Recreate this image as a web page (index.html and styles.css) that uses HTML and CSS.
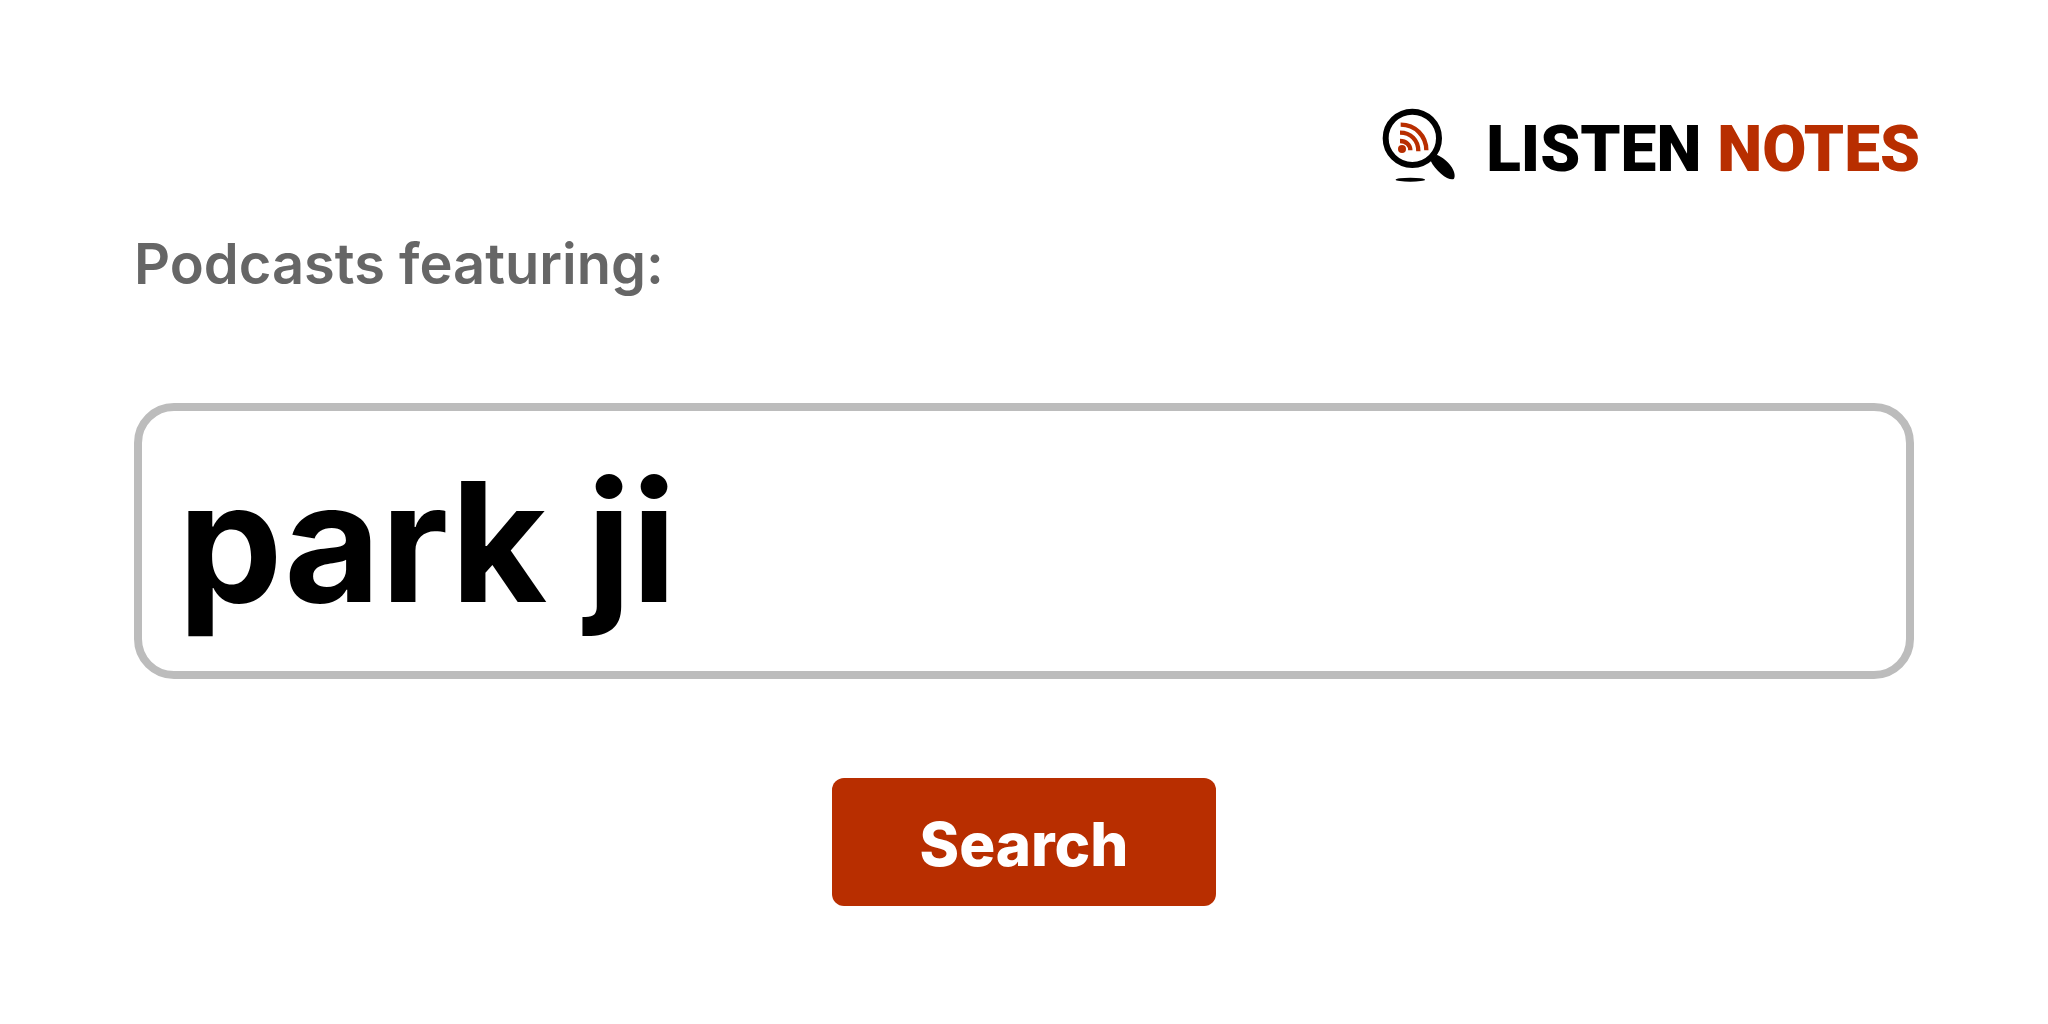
FILE: index.html
```html
<!DOCTYPE html>
<html lang="en">

<head>
    <meta charset="utf-8">
    <meta name="viewport" content="width=device-width, initial-scale=1.0">
    <title>Listen Notes</title>
    <link rel="stylesheet" href="styles.css">
</head>

<body>
    <header>
        <a class="logo" href="#">
            <svg class="logo-icon" viewBox="0 0 216 216" aria-hidden="true">
                <circle cx="91" cy="91" r="80" fill="none" stroke="#000" stroke-width="18"/>
                <path fill="#000" d="M164 140 C182 147 198 162 206 173 C217 187 221 204 216 212 C210 217 193 211 177 197 C164 185 152 172 146 158 Z"/>
                <ellipse cx="85" cy="215" rx="44" ry="6" fill="#000"/>
                <circle cx="60" cy="123" r="12" fill="#b82e00"/>
                <g fill="none" stroke="#b82e00" stroke-width="13">
                    <path d="M54 99 C72 99 85 111 85 127"/>
                    <path d="M54 74 C86 74 109 96 109 130"/>
                    <path d="M56 50 C100 50 133 84 133 127"/>
                </g>
            </svg>
            <span class="logo-text">LISTEN <span class="notes">NOTES</span></span>
        </a>
    </header>

    <main>
        <form class="search">
            <label for="query">Podcasts featuring:</label>
            <input type="text" id="query" name="q" value="park ji" autocomplete="off">
            <button type="submit">Search</button>
        </form>
    </main>
</body>

</html>
```
FILE: styles.css
```css
* {
    box-sizing: border-box;
    padding: 0;
    margin: 0;
}

body {
    background-color: #fff;
    font-family: Inter, "Liberation Sans", sans-serif;
}

header {
    display: flex;
    justify-content: flex-end;
    padding: 108px 128px 0;
}

.logo {
    display: flex;
    align-items: flex-start;
    gap: 32px;
    color: #000;
    text-decoration: none;
}

.logo-icon {
    width: 72px;
    height: 72px;
    overflow: visible;
}

.logo-text {
    font-family: Roboto, sans-serif;
    font-size: 64px;
    font-weight: 900;
    line-height: 84px;
}

.notes {
    color: #b82e00;
}

.search {
    display: flex;
    flex-direction: column;
    padding: 40px 134px;
}

.search label {
    color: #666;
    font-size: 56px;
    font-weight: 600;
    line-height: 64px;
}

.search input {
    width: 100%;
    height: 276px;
    margin: 107px 0 99px;
    padding: 0 36px;
    border: 8px solid #bcbcbc;
    border-radius: 40px;
    outline: none;
    background-color: #fff;
    color: #000;
    font-family: inherit;
    font-size: 166px;
    font-weight: 700;
}

.search button {
    align-self: center;
    padding: 26px 88px 22px;
    border: none;
    border-radius: 12px;
    background-color: #b82e00;
    color: #fff;
    font-family: inherit;
    font-size: 60px;
    font-weight: 800;
    line-height: 80px;
    cursor: pointer;
}
```
